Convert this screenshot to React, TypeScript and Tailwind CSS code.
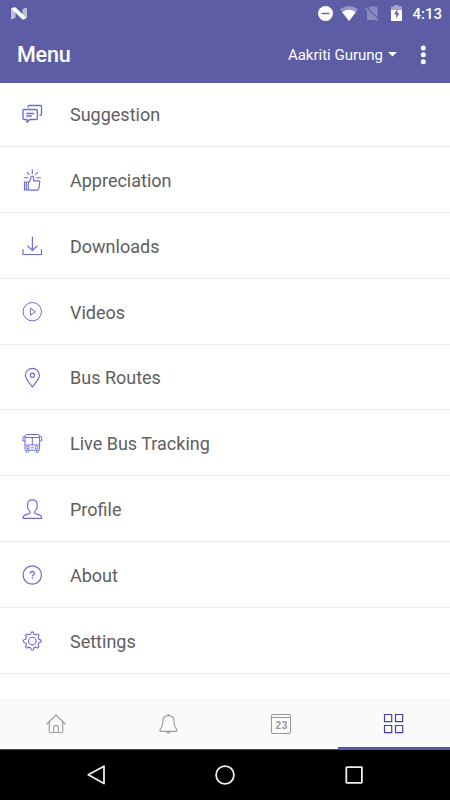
import type { ReactNode } from 'react'

interface IconProps {
  children: ReactNode
  className?: string
}

function Icon({ children, className = 'text-[#6c6cd8]' }: IconProps) {
  return (
    <svg
      viewBox="0 0 20 20"
      className={`h-5 w-5 shrink-0 overflow-visible ${className}`}
      fill="none"
      stroke="currentColor"
      strokeWidth="1"
      strokeLinejoin="round"
    >
      {children}
    </svg>
  )
}

const menuItems = [
  {
    label: 'Suggestion',
    icon: (
      <g strokeWidth="1.35">
        <path d="M6.2 3.5V2.5q0-1 1-1h11.3q1 0 1 1v7.7q0 1-1 1h-1" />
        <path d="M2 5.5h12.3q1 0 1 1v8q0 1-1 1H7.8L5 18.3v-2.8H2q-1 0-1-1v-8q0-1 1-1Z" />
        <path d="M4.3 9.5h8M4.3 12h5.5" />
      </g>
    ),
  },
  {
    label: 'Appreciation',
    icon: (
      <g strokeWidth="1.15">
        <path d="M10.3-.6v4.5M5 2l2.5 3M15.7 2l-2.5 3M1.7 7.7h4.6M14.3 7.7h4.6" />
        <path d="M2.5 12h3.8v8H2.5zM4.3 12v8" />
        <path d="M6.3 12.3c1.7-.7 2.5-2 2.7-5 .1-1.7 2.4-1.5 2.5.3l.2 3.2h4.9q1.3 0 1.1 1.5l-.9 6.6q-.2 1.2-1.4 1.2H8.5l-2.2-.8" />
      </g>
    ),
  },
  {
    label: 'Downloads',
    icon: <path strokeWidth="1.2" strokeLinejoin="miter" d="M10.4.7v13.7M5.3 9.7l5.1 4.8 5-4.8M1 13.3v5.2h18.5v-5.2" />,
  },
  {
    label: 'Videos',
    icon: (
      <>
        <circle cx="10.3" cy="9.7" r="9.2" />
        <path d="M8.4 6.1v7.2l5.1-3.6Z" />
      </>
    ),
  },
  {
    label: 'Bus Routes',
    icon: (
      <g strokeWidth="1.2">
        <path d="M10.4.3a7 7 0 0 0-7 7c0 3.5 3 6.5 7 11.6 4-5.1 7-8.1 7-11.6a7 7 0 0 0-7-7Z" />
        <circle cx="10.4" cy="7.2" r="2.1" />
      </g>
    ),
  },
  {
    label: 'Live Bus Tracking',
    icon: (
      <g>
        <path d="M3 16.5V3.2Q3 1.5 4.7 1.5h11.2q1.7 0 1.7 1.7v13.3q0 .7-.7.7H3.7q-.7 0-.7-.7ZM3 4.5h14.6M3 12h14.6M10.3 4.5V12" />
        <path d="M3 3.5H1.9q-1 0-1 1V8H3M17.6 3.5h1.1q1 0 1 1V8h-2.1M9 14.8h2.7" />
        <circle cx="6" cy="14.7" r="1.3" />
        <circle cx="14.6" cy="14.7" r="1.3" />
        <path d="M4 17.3v1.1q0 1 1 1h.6q1 0 1-1v-1.1M14 17.3v1.1q0 1 1 1h.6q1 0 1-1v-1.1" />
      </g>
    ),
  },
  {
    label: 'Profile',
    icon: (
      <path
        strokeWidth="1.15"
        d="M10.4.9C7.3.9 5.5 2.8 5.5 5.9c0 3 1 5.3 2.6 6.7.4 1.3-.4 2-1.8 2.4-3.8 1-5.2 1.2-5.3 4.3h18.7c-.1-3.1-1.5-3.3-5.3-4.3-1.4-.4-2.2-1.1-1.8-2.4 1.6-1.4 2.7-3.7 2.7-6.7 0-3.1-1.8-5-4.9-5Z"
      />
    ),
  },
  {
    label: 'About',
    icon: (
      <>
        <circle cx="10.3" cy="10" r="9.2" strokeWidth="1.2" />
        <path strokeWidth="1.3" d="M8.2 8.4c0-2.5 4.3-2.5 4.3-.1 0 1.6-2.1 1.5-2.1 3.2M10.4 12.5v1.2" />
      </>
    ),
  },
  {
    label: 'Settings',
    icon: (
      <g strokeWidth="1.15">
        <circle cx="10.3" cy="10" r="3.8" />
        <path d="M8.6 3.2q.4-.2.4-.9.1-1.5 1.3-1.5t1.3 1.5q0 .7.4.9l1.6.7q.5.1.9-.3 1.2-1 2 0 .9.8 0 2-.5.5-.3.9l.6 1.6q.2.5.9.5 1.6.1 1.6 1.4t-1.6 1.4q-.7 0-.9.5l-.6 1.6q-.2.4.3.9.9 1.2 0 2-.8 1-2 0-.4-.4-.9-.3l-1.6.7q-.4.2-.4.9-.1 1.5-1.3 1.5T9 17.8q0-.7-.4-.9L7 16.2q-.5-.1-.9.3-1.2 1-2 0-.9-.8 0-2 .5-.5.3-.9L3.8 12q-.2-.5-.9-.5Q1.3 11.4 1.3 10t1.6-1.5q.7 0 .9-.5l.6-1.6q.2-.4-.3-.9-.9-1.2 0-2 .8-1 2 0 .4.4.9.3Z" />
      </g>
    ),
  },
]

function StatusBar() {
  return (
    <div className="flex h-[26px] items-center pr-[8px] pl-[11px] text-white">
      <svg width="16" height="13" viewBox="0 0 16 13" fill="currentColor">
        <path opacity=".6" d="M0 1.5 4.5.5v10.3L0 12.5zM11.5 2 16 .5V11l-4.5 1.5z" />
        <path d="M1.5.7Q3.5-.5 5.2 1L15 10.5q-1.7 2.8-4 1.5L.5 2z" />
      </svg>
      <svg className="ml-auto" width="15" height="15" viewBox="0 0 15 15">
        <circle cx="7.5" cy="7.5" r="7.5" fill="currentColor" />
        <path d="M3.7 7.5h7.6" stroke="#5d5da6" strokeWidth="1.4" />
      </svg>
      <svg className="ml-[7px]" width="18" height="15" viewBox="0 0 18 15" fill="currentColor">
        <path opacity=".35" d="M0 3.3Q9-3.3 18 3.3L9 15Z" />
        <path d="M2.2 6.2Q9 1.4 15.8 6.2L9 15Z" />
      </svg>
      <svg className="ml-[7px]" width="14" height="15" viewBox="0 0 14 15">
        <path d="M5 .5h6.5q1 0 1 1V14H2V3.5z" fill="#8b8bc0" />
        <path d="m1.2.8 13 13.2" stroke="#5d5da6" strokeWidth="1.3" />
        <path d="m.3 1.6 12.8 12.9" stroke="#8b8bc0" strokeWidth="1.2" />
      </svg>
      <svg className="ml-3" width="11" height="16" viewBox="0 0 11 16">
        <path d="M3.3 0h4.4v1.5H11V5H0V1.5h3.3z" fill="#a5a5cf" />
        <path d="M0 5h11v11H0z" fill="currentColor" />
        <path d="M6.5 4.3 3 9.3h2.2v4l3.2-5.1H6.5z" fill="#5d5da6" />
      </svg>
      <span className="ml-[10.5px] w-[29.5px] pt-[2px] text-[15px] leading-none font-medium whitespace-nowrap">4:13</span>
    </div>
  )
}

function BottomTabs() {
  return (
    <div className="grid h-[52px] shrink-0 grid-cols-4 bg-[#fafafa]">
      <div className="flex items-center justify-center border-b border-[#4c4c4c]">
        <Icon className="text-[#9e9e9e]">
          <path strokeWidth="1.2" d="M.5 10.3 10 1l9.5 9.3M3.3 7.8v9.5q0 1.2 1.2 1.2h11q1.2 0 1.2-1.2V7.8M7.7 18.3v-5.8q0-.9.9-.9h2.8q.9 0 .9.9v5.8" />
        </Icon>
      </div>
      <div className="flex items-center justify-center border-b border-[#4c4c4c]">
        <Icon className="text-[#9e9e9e]">
          <path strokeWidth="1.15" d="M8.3 1.7q0-1.2 1.1-1.2t1.1 1.2M9.4 1.6c-3.6 0-5.6 2.3-5.6 5.8 0 4.8-.8 6-2.6 8.2q-.8 1.8.5 1.8h15.4q1.3 0 .5-1.8c-1.8-2.2-2.6-3.4-2.6-8.2 0-3.5-2-5.8-5.6-5.8Z" />
          <path fill="currentColor" d="M7.4 17.8h4q-.4 1.2-2 1.2t-2-1.2Z" />
        </Icon>
      </div>
      <div className="flex items-center justify-center border-b border-[#4c4c4c]">
        <div className="flex h-5 w-5 flex-col rounded-[2px] border border-[#979797] text-[#969696]">
          <div className="h-[3px] border-b border-[#979797]" />
          <span className="pt-[3px] pl-[1px] text-center font-['Liberation_Sans',sans-serif] text-[10px] leading-[10px] font-bold tracking-[0.7px]">
            23
          </span>
        </div>
      </div>
      <div className="flex items-center justify-center border-b-[3px] border-[#5556aa] pt-[3px]">
        <Icon className="text-[#4543a7]">
          <path strokeLinejoin="miter" strokeWidth="1.2" d="M.5.5h7.2v7.2H.5zM11.5.5h7.2v7.2h-7.2zM.5 11.5h7.2v7.2H.5zM11.5 11.5h7.2v7.2h-7.2z" />
        </Icon>
      </div>
    </div>
  )
}

export default function App() {
  return (
    <div className="flex h-[800px] w-[450px] flex-col overflow-hidden bg-white font-[Roboto,sans-serif]">
      <header className="h-[83px] shrink-0 bg-[#5d5da6] text-white">
        <StatusBar />
        <div className="flex h-[57px] items-center pr-6 pl-[17px]">
          <h1 className="pt-[2px] text-[21.5px] font-medium tracking-[-0.2px]">Menu</h1>
          <span className="ml-auto pt-[2px] text-[15px]">Aakriti Gurung</span>
          <svg className="ml-[5px]" width="9" height="5" viewBox="0 0 9 5" fill="currentColor">
            <path d="M0 0h9L4.5 4.6z" />
          </svg>
          <svg className="ml-[23px]" width="6" height="20" viewBox="0 0 6 20" fill="currentColor">
            <circle cx="3.3" cy="3" r="2.5" />
            <circle cx="3.3" cy="9.7" r="2.5" />
            <circle cx="3.3" cy="16.7" r="2.5" />
          </svg>
        </div>
      </header>

      {/* Menu list */}
      <ul className="-mt-[1.5px] flex-1">
        {menuItems.map((item) => (
          <li key={item.label} className="flex h-[65.8px] items-center border-b border-[#ebebeb] pt-px pl-[22px]">
            <Icon>{item.icon}</Icon>
            <span className="ml-7 pt-[0.5px] text-[18px] text-[#606060]">{item.label}</span>
          </li>
        ))}
      </ul>

      <BottomTabs />

      {/* System navigation */}
      <nav className="flex h-[50px] shrink-0 items-center justify-center gap-[109px] bg-black pb-px">
        <Icon className="text-[#eeeeee]">
          <path strokeWidth="1.8" d="M18 1.2v17.3L2.3 9.8Z" />
        </Icon>
        <Icon className="text-[#eeeeee]">
          <circle cx="10" cy="10" r="8.9" strokeWidth="1.8" />
        </Icon>
        <Icon className="text-[#eeeeee]">
          <rect x="2.3" y="2.2" width="15.6" height="15.6" rx=".5" strokeWidth="1.8" />
        </Icon>
      </nav>
    </div>
  )
}
